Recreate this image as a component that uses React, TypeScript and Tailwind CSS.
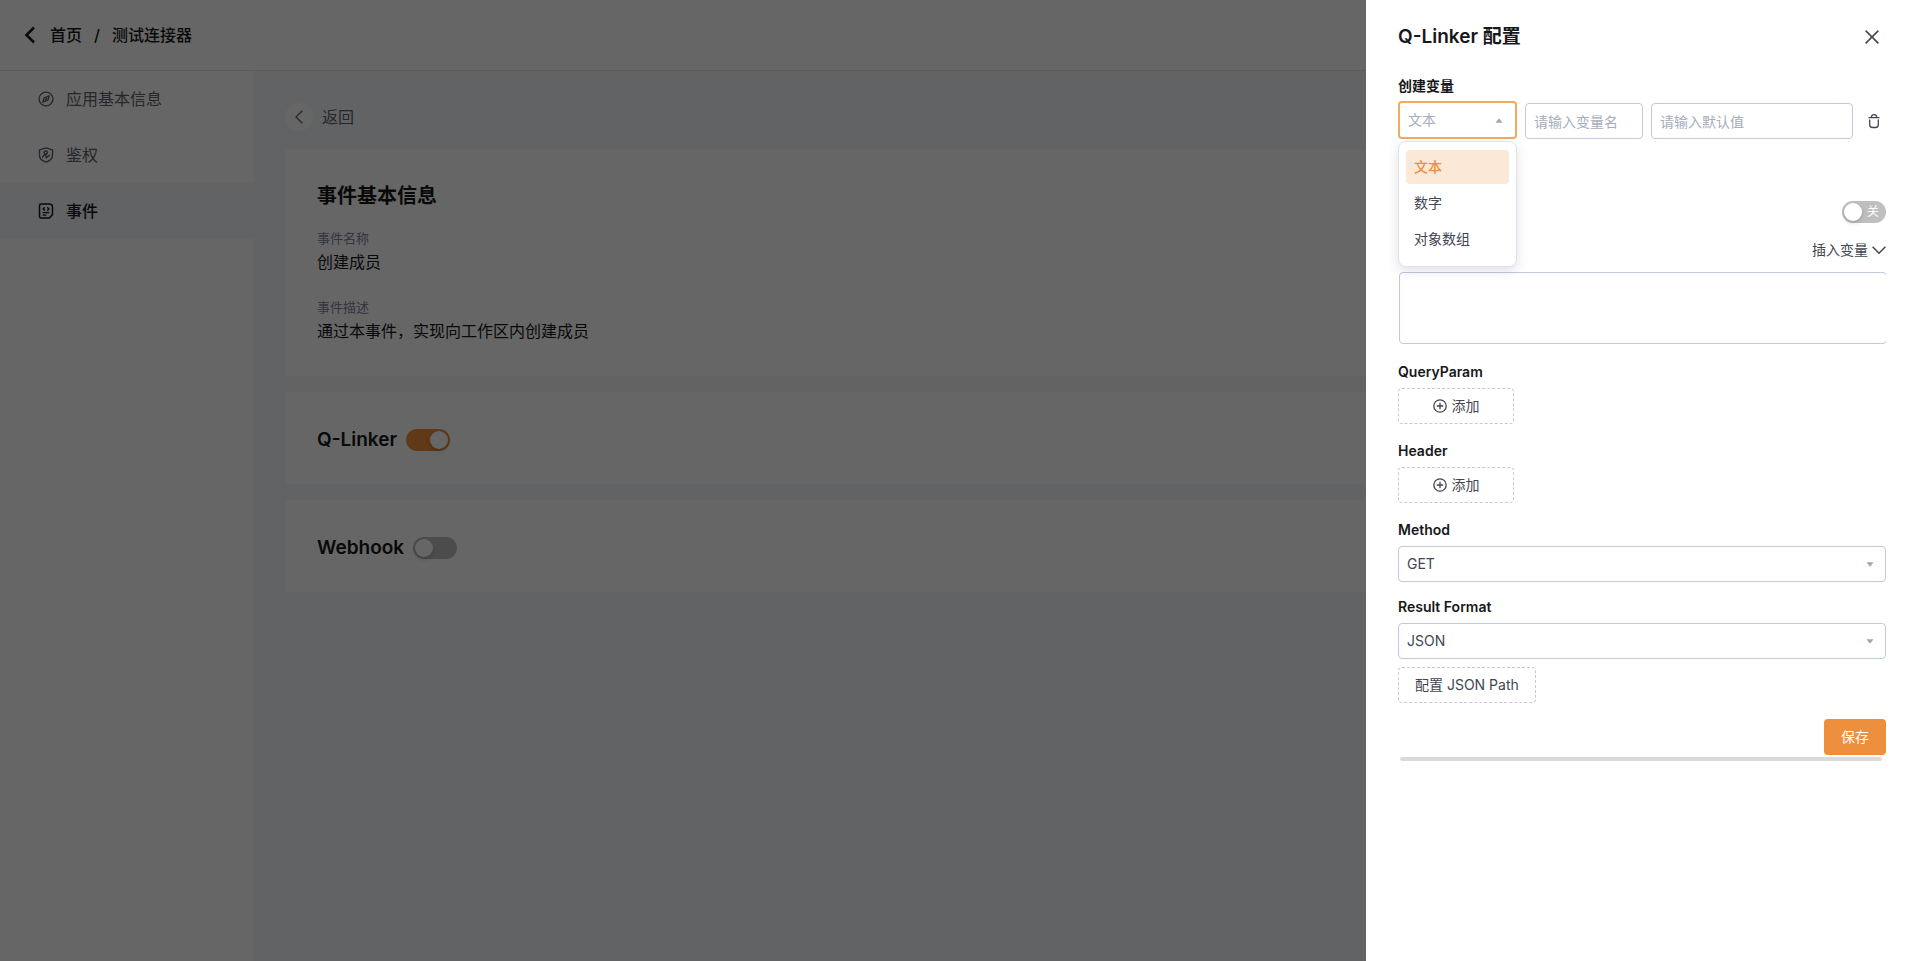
import { useState } from "react";
import type { ReactNode } from "react";
import clsx from "clsx";

type MenuItem = {
  key: string;
  label: string;
  icon: ReactNode;
};

type SwitchProps = {
  label: string;
  checked: boolean;
  text?: string;
  onChange: (value: boolean) => void;
};

type SelectFieldProps = {
  id: string;
  label: string;
  value: string;
  options: string[];
  onChange: (value: string) => void;
};

const menuItems: MenuItem[] = [
  { key: "info", label: "应用基本信息", icon: <CompassIcon /> },
  { key: "auth", label: "鉴权", icon: <ShieldIcon /> },
  { key: "event", label: "事件", icon: <EventIcon /> },
];

const variableTypes = ["文本", "数字", "对象数组"];

function CompassIcon() {
  return (
    <svg viewBox="0 0 16 16" className="size-4" fill="none" stroke="currentColor" strokeWidth="1.4">
      <circle cx="8" cy="8" r="6.9" />
      <path d="M11.2 4.8 9.8 9.2 4.8 11.2 6.2 6.8Z" strokeLinejoin="round" />
      <path d="M7.5 8.5 8.5 7.5" strokeLinecap="round" />
    </svg>
  );
}

function ShieldIcon() {
  return (
    <svg viewBox="0 0 16 16" className="size-4" fill="none" stroke="currentColor" strokeWidth="1.4" strokeLinejoin="round">
      <path d="M8 .9 14.5 2.8v5.4c0 3.4-2.7 5.6-6.5 6.9C4.2 13.8 1.5 11.6 1.5 8.2V2.8Z" />
      <circle cx="7.8" cy="5.6" r="1.6" />
      <path d="M4.6 10.4C5.2 8.6 6.3 7.5 7.8 7.3L8.3 10.8 11.6 8.3" strokeLinecap="round" />
    </svg>
  );
}

function EventIcon() {
  return (
    <svg viewBox="0 0 16 16" className="size-4" fill="none" stroke="currentColor" strokeWidth="1.5" strokeLinecap="round" strokeLinejoin="round">
      <path d="M3 1h8.5a3 3 0 0 1 3 3v7.500L11.500 15H3a1.500 1.500 0 0 1-1.500-1.500v-11A1.500 1.500 0 0 1 3 1Z" />
      <path d="M6.400 4.700 5.100 6l1.300 1.300M9.600 4.700 10.900 6 9.600 7.300M5.200 9.700h5.600M5.200 12.100h2.600" strokeWidth="1.3" />
    </svg>
  );
}

function TrashIcon() {
  return (
    <svg viewBox="0 0 16 16" className="size-4" fill="none" stroke="currentColor" strokeWidth="1.3" strokeLinecap="round">
      <path d="M3 4.700h10M5.300 4.500C5.300 2.800 6.300 1.700 8 1.700s2.700 1.100 2.700 2.800M3.700 7v4.800a2.700 2.700 0 0 0 2.700 2.700h3.200a2.700 2.700 0 0 0 2.700-2.700V7" />
    </svg>
  );
}

function PlusCircleIcon() {
  return (
    <svg viewBox="0 0 14 14" className="size-[14px]" fill="none" stroke="currentColor" strokeWidth="1.3" strokeLinecap="round">
      <circle cx="7" cy="7" r="6.2" />
      <path d="M7 4.200v5.600M4.200 7h5.600" />
    </svg>
  );
}

function Caret({ up }: { up?: boolean }) {
  return (
    <svg viewBox="0 0 8 5" className={clsx("h-[5px] w-2 shrink-0 text-[#9ea6b4]", up && "rotate-180")}>
      <path d="M.5.300h7L4 4.800Z" fill="currentColor" />
    </svg>
  );
}

function Switch({ label, checked, text, onChange }: SwitchProps) {
  return (
    <button
      type="button"
      role="switch"
      aria-label={label}
      aria-checked={checked}
      onClick={() => onChange(!checked)}
      className={clsx(
        "flex h-[22px] w-11 shrink-0 items-center justify-between rounded-full p-0.5 text-xs text-white",
        checked ? "flex-row-reverse bg-[#ed8f3d]" : "bg-[#bfbfbf]"
      )}
    >
      <span className="size-[18px] rounded-full bg-white shadow-[0_2px_4px_rgba(0,35,11,0.2)]" />
      {text ? <span className="pr-[5px]">{text}</span> : null}
    </button>
  );
}

function AddButton() {
  return (
    <button
      type="button"
      className="flex h-9 w-29 items-center justify-center gap-[5px] rounded border border-dashed border-[#c2c9da]"
    >
      <PlusCircleIcon />
      添加
    </button>
  );
}

function SelectField({ id, label, value, options, onChange }: SelectFieldProps) {
  return (
    <div className="flex flex-col gap-[6px]">
      <label htmlFor={id} className="font-semibold leading-[21px] text-[#17181a]">
        {label}
      </label>
      <div className="grid items-center">
        <select
          id={id}
          value={value}
          onChange={(e) => onChange(e.target.value)}
          className="col-start-1 row-start-1 h-9 w-full appearance-none rounded border border-[#c2c9da] bg-white px-2"
        >
          {options.map((option) => (
            <option key={option}>{option}</option>
          ))}
        </select>
        <span className="pointer-events-none col-start-1 row-start-1 mr-3 justify-self-end">
          <Caret />
        </span>
      </div>
    </div>
  );
}

export default function App() {
  const [activeMenu, setActiveMenu] = useState("event");
  const [qLinker, setQLinker] = useState(true);
  const [webhook, setWebhook] = useState(false);
  const [advanced, setAdvanced] = useState(false);
  const [typeOpen, setTypeOpen] = useState(true);
  const [variableType, setVariableType] = useState("文本");
  const [method, setMethod] = useState("GET");
  const [format, setFormat] = useState("JSON");

  return (
    <div className="relative flex min-h-screen flex-col bg-white font-[Inter,'Noto_Sans_CJK_SC',sans-serif] text-sm text-[#41464f]">
      <header className="flex h-[71px] items-center border-b border-[#dfe4ee] px-6 text-base font-medium text-[#17181a]">
        <button type="button" aria-label="后退">
          <svg viewBox="0 0 12 18" className="h-[18px] w-3" fill="none" stroke="currentColor" strokeWidth="2.5">
            <path d="M10 1.500 2.500 9l7.500 7.500" />
          </svg>
        </button>
        <nav className="ml-[14px] flex gap-3">
          <a href="#home">首页</a>
          <span>/</span>
          <a href="#connector">测试连接器</a>
        </nav>
      </header>

      <div className="flex flex-1">
        <aside className="w-[254px] shrink-0">
          {menuItems.map((item) => (
            <button
              key={item.key}
              type="button"
              onClick={() => setActiveMenu(item.key)}
              className={clsx(
                "flex h-14 w-full items-center gap-3 pl-[38px] text-base",
                activeMenu === item.key ? "bg-[#f4f7fc] font-medium text-[#17181a]" : "text-[#5c6370]"
              )}
            >
              {item.icon}
              {item.label}
            </button>
          ))}
        </aside>

        <main className="flex-1 bg-[#f4f7fc] pt-8 pr-8 pl-[31px]">
          <a href="#back" className="flex h-7 items-center gap-[9px] text-base text-[#5c6370]">
            <span className="flex size-7 items-center justify-center rounded-full bg-white">
              <svg viewBox="0 0 8 14" className="h-[14px] w-2" fill="none" stroke="currentColor" strokeWidth="1.3">
                <path d="M7.300.7 1 7l6.300 6.300" />
              </svg>
            </span>
            返回
          </a>

          <section className="mt-[19px] bg-white px-8 pt-[30px] pb-[33px]">
            <h2 className="text-xl font-semibold leading-8 text-[#17181a]">事件基本信息</h2>
            <dl className="mt-[14px]">
              <dt className="text-[13px] leading-6 text-[#8087a0]">事件名称</dt>
              <dd className="text-base text-[#17181a]">创建成员</dd>
              <dt className="mt-[21px] text-[13px] leading-6 text-[#8087a0]">事件描述</dt>
              <dd className="text-base text-[#17181a]">通过本事件，实现向工作区内创建成员</dd>
            </dl>
          </section>

          <section className="mt-4 flex h-23 items-center gap-[9px] bg-white px-8 pt-1">
            <h2 className="text-[19px] font-semibold text-[#17181a]">Q-Linker</h2>
            <Switch label="Q-Linker" checked={qLinker} onChange={setQLinker} />
          </section>

          <section className="mt-4 flex h-23 items-center gap-[9px] bg-white px-8 pt-1">
            <h2 className="text-[19px] font-semibold text-[#17181a]">Webhook</h2>
            <Switch label="Webhook" checked={webhook} onChange={setWebhook} />
          </section>
        </main>
      </div>

      <div className="fixed inset-0 flex justify-end bg-black/60">
        <div role="dialog" aria-labelledby="drawer-title" className="w-[552px] overflow-y-auto bg-white px-8 pt-[21px]">
          <div className="flex h-8 items-center justify-between text-[#17181a]">
            <h1 id="drawer-title" className="text-[19px] font-semibold">
              Q-Linker 配置
            </h1>
            <button type="button" aria-label="关闭" className="mr-[7px]">
              <svg viewBox="0 0 14 14" className="size-[14px]" fill="none" stroke="#41464f" strokeWidth="1.5">
                <path d="m.6.6 12.800 12.800M13.400.6.6 13.400" />
              </svg>
            </button>
          </div>

          <form onSubmit={(e) => e.preventDefault()}>
            <fieldset className="mt-[22px] min-w-0">
              <legend className="font-semibold leading-[21px] text-[#17181a]">创建变量</legend>
              <div className="mt-[5px] flex items-end gap-2">
                <div className="relative w-[119px] shrink-0">
                  <button
                    type="button"
                    aria-haspopup="listbox"
                    aria-expanded={typeOpen}
                    onClick={() => setTypeOpen((prev) => !prev)}
                    className="flex h-[38px] w-full items-center justify-between rounded border-2 border-[#f4a963] pr-3 pl-2 text-[#a6adbb]"
                  >
                    {variableType}
                    <Caret up={typeOpen} />
                  </button>
                  {typeOpen ? (
                    <ul
                      role="listbox"
                      className="absolute top-full left-0 z-10 mt-0.5 flex h-[126px] w-full flex-col gap-0.5 rounded-lg border border-[#dfe3ee] bg-white px-[7px] py-2 shadow-[0_4px_12px_rgba(60,70,100,0.16)]"
                    >
                      {variableTypes.map((type) => (
                        <li
                          key={type}
                          role="option"
                          aria-selected={type === variableType}
                          onClick={() => {
                            setVariableType(type);
                            setTypeOpen(false);
                          }}
                          className={clsx(
                            "flex h-[34px] cursor-pointer items-center rounded px-2",
                            type === variableType && "bg-[#fce8d7] font-medium text-[#ed8f3d]"
                          )}
                        >
                          {type}
                        </li>
                      ))}
                    </ul>
                  ) : null}
                </div>
                <input
                  aria-label="变量名"
                  placeholder="请输入变量名"
                  className="h-9 w-[118px] shrink-0 rounded border border-[#c2c9da] px-2 placeholder:text-[#a6adbb]"
                />
                <input
                  aria-label="默认值"
                  placeholder="请输入默认值"
                  className="h-9 min-w-0 flex-1 rounded border border-[#c2c9da] px-2 placeholder:text-[#a6adbb]"
                />
                <button type="button" aria-label="删除" className="mr-1 ml-[5px] flex h-9 items-center">
                  <TrashIcon />
                </button>
              </div>
            </fieldset>

            <div className="mt-[62px] flex justify-end">
              <Switch label="URL" checked={advanced} text={advanced ? "开" : "关"} onChange={setAdvanced} />
            </div>

            <div className="mt-4 flex h-[22px] justify-end">
              <button type="button" className="flex items-center gap-1">
                插入变量
                <svg viewBox="0 0 14 8" className="h-2 w-[14px]" fill="none" stroke="currentColor" strokeWidth="1.5">
                  <path d="M.6.8 7 7.200 13.400.8" />
                </svg>
              </button>
            </div>

            <div className="mt-[11px] overflow-hidden">
              <textarea
                aria-label="请求地址"
                className="ml-px block h-18 w-full resize-none rounded border border-[#c2c9da] p-2"
              />
            </div>

            <div className="mt-[17px] flex flex-col gap-[6px]">
              <h3 className="font-semibold leading-[21px] text-[#17181a]">QueryParam</h3>
              <AddButton />
            </div>

            <div className="mt-4 flex flex-col gap-[6px]">
              <h3 className="font-semibold leading-[21px] text-[#17181a]">Header</h3>
              <AddButton />
            </div>

            <div className="mt-4 flex flex-col gap-[14px]">
              <SelectField id="method" label="Method" value={method} options={["GET", "POST", "PUT", "DELETE"]} onChange={setMethod} />
              <SelectField id="format" label="Result Format" value={format} options={["JSON", "XML"]} onChange={setFormat} />
            </div>

            <button type="button" className="mt-2 h-9 rounded border border-dashed border-[#c2c9da] px-4">
              配置 JSON Path
            </button>

            <div className="mt-4 flex justify-end">
              <button type="submit" className="h-9 rounded bg-[#ed8f3d] px-[17px] text-white">
                保存
              </button>
            </div>
          </form>
          <div className="mt-0.5 mr-1 ml-0.5 h-1 rounded-full bg-[#d9dadc]" />
        </div>
      </div>
    </div>
  );
}
